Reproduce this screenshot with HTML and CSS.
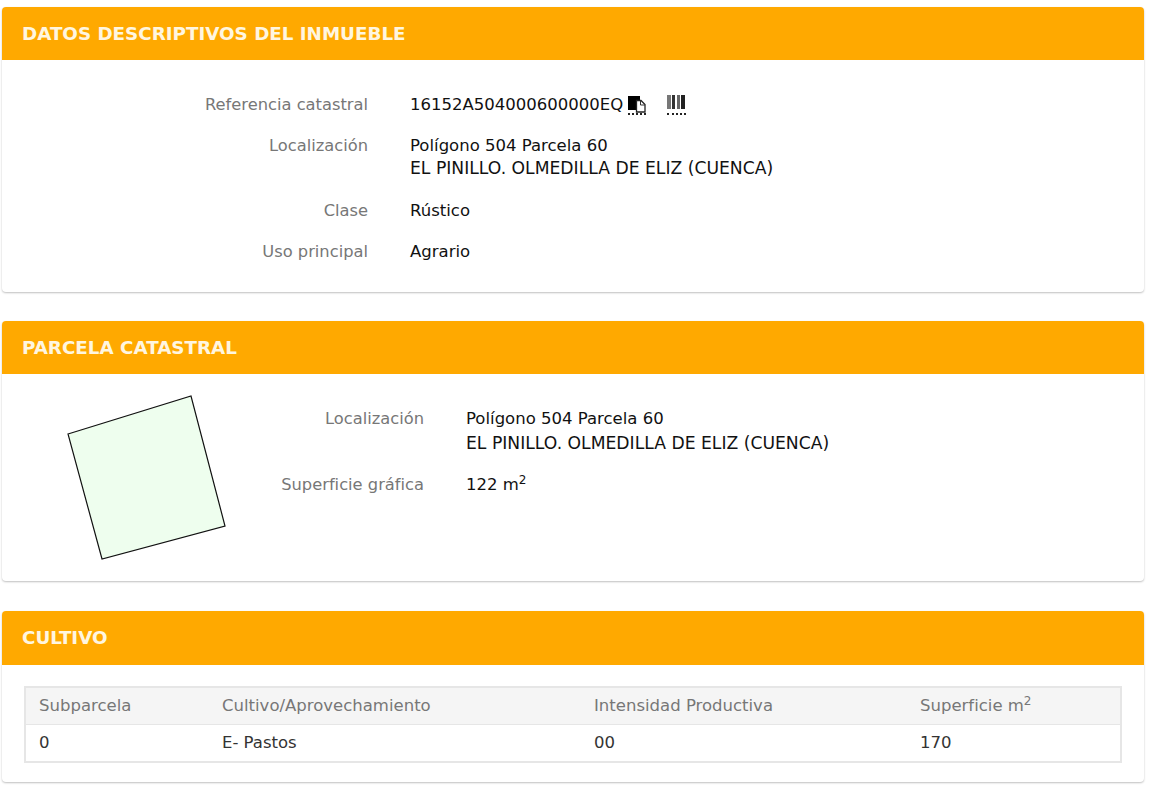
FILE: index.html
```html
<!DOCTYPE html>
<html lang="es">

<head>
  <title>Datos descriptivos del inmueble</title>
  <link rel="stylesheet" href="styles.css">
</head>

<body>
  <div class="panel panel-datos">
    <div class="panel-heading">DATOS DESCRIPTIVOS DEL INMUEBLE</div>
    <div class="panel-body">
      <div class="row">
        <div class="label">Referencia catastral</div>
        <div class="value ref-value">
          <span>16152A504000600000EQ</span>
          <a class="icon-link icon-copy" href="#">
            <svg width="18" height="18" viewBox="0 0 18 18">
              <path d="M0 1h12v3h0v11H0z" fill="#000"/>
              <path d="M8.500 5.500h4.500l4 4v7.500H8.500z" fill="#fff" stroke="#222" stroke-width="1.300"/>
              <path d="M12.500 5.500v4.500h4.500" fill="none" stroke="#333"/>
            </svg>
          </a>
          <a class="icon-link icon-barcode" href="#">
            <svg width="19" height="18" viewBox="0 0 19 18">
              <path d="M0 0h4v14H0z" fill="#777"/>
              <path d="M5 0h3v14H5z" fill="#333"/>
              <path d="M10 0h3v14h-3z" fill="#666"/>
              <path d="M14 0h4v14h-4z" fill="#222"/>
            </svg>
          </a>
        </div>
      </div>
      <div class="row row-address">
        <div class="label">Localización</div>
        <div class="value">Polígono 504 Parcela 60<br><span class="caps-line">EL PINILLO. OLMEDILLA DE ELIZ (CUENCA)</span></div>
      </div>
      <div class="row">
        <div class="label">Clase</div>
        <div class="value">Rústico</div>
      </div>
      <div class="row">
        <div class="label">Uso principal</div>
        <div class="value">Agrario</div>
      </div>
    </div>
  </div>

  <div class="panel panel-parcela">
    <div class="panel-heading">PARCELA CATASTRAL</div>
    <div class="panel-body parcela-body">
      <svg class="parcela-map" width="159" height="165" viewBox="0 0 159 165">
        <polygon points="1,39 124,1 158,131 35,164" fill="#eefeee" stroke="#111" stroke-width="1.200"/>
      </svg>
      <div class="parcela-data">
        <div class="row">
          <div class="label">Localización</div>
          <div class="value">Polígono 504 Parcela 60<br><span class="caps-line">EL PINILLO. OLMEDILLA DE ELIZ (CUENCA)</span></div>
        </div>
        <div class="row">
          <div class="label">Superficie gráfica</div>
          <div class="value">122 m<sup>2</sup></div>
        </div>
      </div>
    </div>
  </div>

  <div class="panel panel-cultivo">
    <div class="panel-heading">CULTIVO</div>
    <div class="panel-body cultivo-body">
      <table class="cultivo-table">
        <thead>
          <tr>
            <th class="col-sub">Subparcela</th>
            <th class="col-cult">Cultivo/Aprovechamiento</th>
            <th class="col-int">Intensidad Productiva</th>
            <th>Superficie m<sup>2</sup></th>
          </tr>
        </thead>
        <tbody>
          <tr>
            <td>0</td>
            <td>E- Pastos</td>
            <td>00</td>
            <td>170</td>
          </tr>
        </tbody>
      </table>
    </div>
  </div>
</body>

</html>
```

FILE: styles.css
```css
body {
  margin: 0;
  padding: 7px 10px 0 2px;
  background-color: #fff;
  font-family: "DejaVu Sans", sans-serif;
  font-size: 16.500px;
  line-height: 24px;
  color: #222;
}

.panel {
  border-radius: 4px;
  background-color: #fff;
  box-shadow: 0 1px 2px rgba(0, 0, 0, 0.25);
  margin-bottom: 29px;
}

.panel-heading {
  height: 53px;
  padding-left: 20px;
  background-color: #ffa900;
  border-top-left-radius: 4px;
  border-top-right-radius: 4px;
  color: #fff6e0;
  font-size: 18.300px;
  font-weight: bold;
  line-height: 54px;
}

.panel-datos .panel-body {
  height: 232px;
  padding-top: 33px;
  box-sizing: border-box;
}

.row {
  display: flex;
  margin-bottom: 17px;
}

.row-address {
  line-height: 23px;
  margin-bottom: 19px;
}

.label {
  width: 366px;
  margin-right: 42px;
  flex-shrink: 0;
  text-align: right;
  font-size: 16.300px;
  color: #777;
}

.value {
  color: #111;
}

.caps-line {
  font-size: 17.200px;
}

.ref-value {
  display: flex;
  align-items: flex-start;
}

.icon-link {
  display: block;
  height: 18px;
  border-bottom: 2px dotted #222;
  line-height: 0;
}

.icon-copy {
  margin: 2px 0 0 5px;
}

.icon-barcode {
  margin: 2px 0 0 21px;
}

sup {
  font-size: 12px;
  line-height: 0;
}

.panel-parcela {
  margin-bottom: 30px;
}

.parcela-body {
  display: flex;
  height: 207px;
  box-sizing: border-box;
  padding: 21px 0 0 65px;
}

.parcela-map {
  margin-right: 54px;
  flex-shrink: 0;
}

.parcela-data {
  padding-top: 11px;
  line-height: 25px;
}

.parcela-data .label {
  width: 144px;
}

.parcela-data .row {
  margin-bottom: 16px;
}

.panel-cultivo .panel-heading {
  height: 54px;
}

.cultivo-body {
  height: 117px;
  box-sizing: border-box;
  padding: 21px 22px 0 22px;
}

.cultivo-table {
  width: 100%;
  border: 2px solid #e6e6e6;
  border-collapse: collapse;
  table-layout: fixed;
}

.cultivo-table th {
  height: 36px;
  padding: 0 0 0 13px;
  background-color: #f5f5f5;
  border-bottom: 1px solid #e6e6e6;
  color: #777;
  font-weight: normal;
  text-align: left;
}

.cultivo-table td {
  height: 36px;
  padding: 0 0 0 13px;
  color: #333;
}

.col-sub {
  width: 170px;
}

.col-cult {
  width: 359px;
}

.col-int {
  width: 313px;
}
```
